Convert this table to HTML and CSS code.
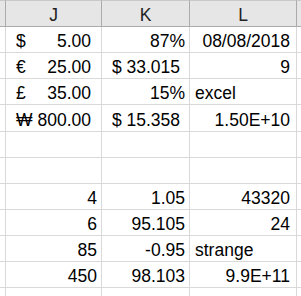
FILE: index.html
```html
<!DOCTYPE html>
<html>
<head>
<meta charset="utf-8">
<link rel="stylesheet" href="styles.css">
</head>
<body>
<div class="sheet">
  <div class="hd corner"></div>
  <div class="hd">J</div>
  <div class="hd">K</div>
  <div class="hd">L</div>
  <div class="hd tail"></div>

  <div class="c lead"></div>
  <div class="c acc"><span>$</span><span>5.00</span></div>
  <div class="c num">87%</div>
  <div class="c num l">08/08/2018</div>
  <div class="c tail"></div>

  <div class="c lead"></div>
  <div class="c acc"><span>€</span><span>25.00</span></div>
  <div class="c num cur">$ 33.015</div>
  <div class="c num l">9</div>
  <div class="c tail"></div>

  <div class="c lead"></div>
  <div class="c acc"><span>£</span><span>35.00</span></div>
  <div class="c num">15%</div>
  <div class="c txt">excel</div>
  <div class="c tail"></div>

  <div class="c lead"></div>
  <div class="c acc"><span>₩</span><span>800.00</span></div>
  <div class="c num cur">$ 15.358</div>
  <div class="c num l">1.50E+10</div>
  <div class="c tail"></div>

  <div class="c lead"></div>
  <div class="c"></div>
  <div class="c"></div>
  <div class="c"></div>
  <div class="c tail"></div>

  <div class="c lead"></div>
  <div class="c"></div>
  <div class="c"></div>
  <div class="c"></div>
  <div class="c tail"></div>

  <div class="c lead"></div>
  <div class="c num">4</div>
  <div class="c num">1.05</div>
  <div class="c num l">43320</div>
  <div class="c tail"></div>

  <div class="c lead"></div>
  <div class="c num">6</div>
  <div class="c num">95.105</div>
  <div class="c num l">24</div>
  <div class="c tail"></div>

  <div class="c lead"></div>
  <div class="c num">85</div>
  <div class="c num">-0.95</div>
  <div class="c txt">strange</div>
  <div class="c tail"></div>

  <div class="c lead"></div>
  <div class="c num">450</div>
  <div class="c num">98.103</div>
  <div class="c num l">9.9E+11</div>
  <div class="c tail"></div>

  <div class="c lead"></div>
  <div class="c"></div>
  <div class="c"></div>
  <div class="c"></div>
  <div class="c tail"></div>
</div>
</body>
</html>
```
FILE: styles.css
```css
html, body {
  margin: 0;
  padding: 0;
  background: #ffffff;
}

.sheet {
  display: grid;
  grid-template-columns: 6px 96px 88px 107px 4px;
  grid-template-rows: 27px 26px 26px 26px 27px 26px 26px 26px 26px 26px 26px 26px;
  width: 301px;
  height: 296px;
  overflow: hidden;
  font-family: "Liberation Sans", Arial, sans-serif;
  font-size: 17.5px;
  line-height: 20px;
  color: #000;
}

.hd {
  box-sizing: border-box;
  background: #e6e6e6;
  border-top: 1px solid #c9c9c9;
  border-right: 1px solid #ababab;
  border-bottom: 1px solid #ababab;
  display: flex;
  align-items: flex-end;
  justify-content: center;
  padding-bottom: 1px;
  color: #222;
}

.hd.tail {
  border-right: none;
}

.c {
  box-sizing: border-box;
  border-right: 1px solid #d9d9d9;
  border-bottom: 1px solid #d9d9d9;
  display: flex;
  align-items: flex-end;
  padding-bottom: 1px;
  white-space: nowrap;
  overflow: hidden;
}

.c.tail {
  border-right: none;
}

.num {
  justify-content: flex-end;
  padding-right: 4px;
}

.num.l {
  padding-right: 6px;
}

.num.cur {
  padding-right: 9px;
}

.txt {
  justify-content: flex-start;
  padding-left: 5px;
}

.acc {
  justify-content: space-between;
  padding-left: 10px;
  padding-right: 10px;
}
```
